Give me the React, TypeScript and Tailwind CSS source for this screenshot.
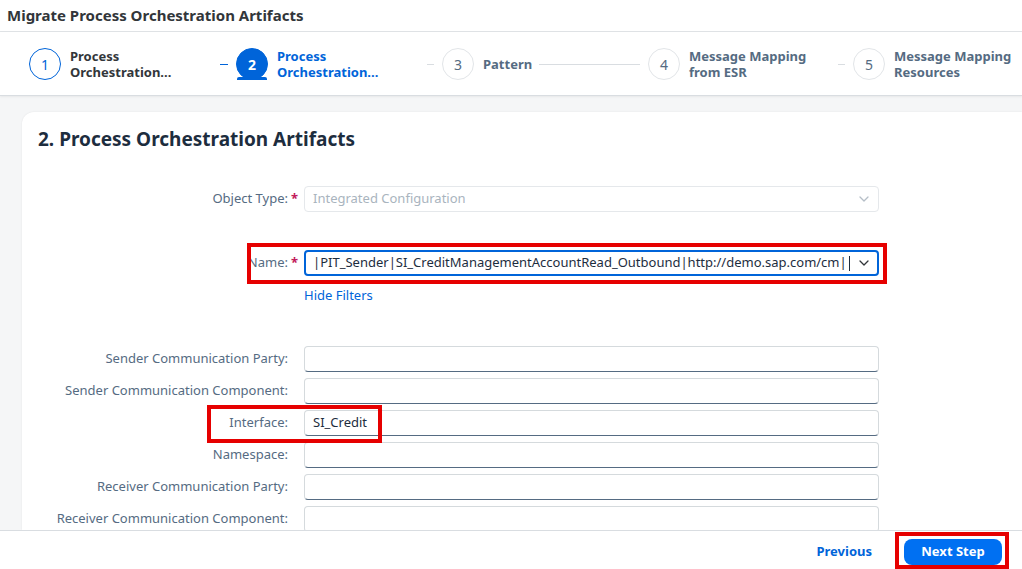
import React from "react";

type StepState = "done" | "active" | "todo";

const Step: React.FC<{ n: number; lines: string[]; state: StepState; textW: string }> = ({
  n,
  lines,
  state,
  textW,
}) => {
  const circle =
    state === "active"
      ? "bg-[#0064d9] border-[#0064d9] text-white font-bold"
      : state === "done"
        ? "bg-white border-[#0064d9] text-[#0064d9]"
        : "bg-white border-[#e2e5e8] text-[#556b82]";
  const text =
    state === "active" ? "text-[#0064d9]" : state === "done" ? "text-[#32363a]" : "text-[#556b82]";
  return (
    <div className="flex items-center shrink-0">
      <div className="relative shrink-0">
        <div
          className={`w-[32px] h-[32px] rounded-full border flex items-center justify-center text-[14px] ${circle}`}
        >
          {n}
        </div>
        {state === "active" && (
          <div className="absolute left-[1px] top-[29px] w-[30px] h-[3px] bg-[#0064d9] rounded-t-[2px]" />
        )}
      </div>
      <div className={`ml-[9px] shrink-0 ${textW} text-[13px] font-bold leading-[16px] ${text}`}>
        {lines.map((l) => (
          <div key={l} className="whitespace-nowrap">
            {l}
          </div>
        ))}
      </div>
    </div>
  );
};

const Connector: React.FC<{ w: string; active?: boolean }> = ({ w, active }) => (
  <div className={`mx-[8px] h-px shrink-0 ${w} ${active ? "bg-[#0064d9]" : "bg-[#d9dde1]"}`} />
);

const Chevron: React.FC<{ color: string }> = ({ color }) => (
  <svg width="12" height="12" viewBox="0 0 12 12" fill="none" className="shrink-0">
    <path d="M2 4 L6 8 L10 4" stroke={color} strokeWidth="1.3" strokeLinecap="round" strokeLinejoin="round" />
  </svg>
);

const FieldRow: React.FC<{ label: string; required?: boolean; children: React.ReactNode }> = ({
  label,
  required,
  children,
}) => (
  <div className="flex items-center h-[26px]">
    <div className="w-[266px] text-right text-[13px] text-[#556b82] whitespace-nowrap">{label}</div>
    <div className="w-[16px] pl-[3px] text-[#c2185b] text-[13px] font-bold">{required ? "*" : ""}</div>
    {children}
  </div>
);

const TextInput: React.FC<{ value?: string }> = ({ value }) => (
  <div className="w-[575px] h-[26px] bg-white rounded-[4px] border border-[#d5dadd] border-b-[#556b82] px-[8px] flex items-center text-[13px] text-[#1d2d3e]">
    {value}
  </div>
);

export default function App() {
  return (
    <div
      className="w-[1022px] h-[569px] overflow-hidden relative flex flex-col bg-[#f5f6f7]"
      style={{ fontFamily: '"Noto Sans", Arial, sans-serif' }}
    >
      {/* title bar */}
      <div className="h-[32px] shrink-0 bg-white border-b border-[#e0e3e6] flex items-center px-[7px]">
        <div className="text-[15px] font-bold text-[#32363a]">Migrate Process Orchestration Artifacts</div>
      </div>

      {/* wizard steps */}
      <div className="h-[64px] shrink-0 bg-white border-b border-[#d9dde1] shadow-[0_1px_2px_rgba(0,0,0,0.06)] flex items-center pl-[29px] pt-[1px]">
        <Step n={1} lines={["Process", "Orchestration..."]} state="done" textW="w-[142px]" />
        <Connector w="w-[8px]" active />
        <Step n={2} lines={["Process", "Orchestration..."]} state="active" textW="w-[142px]" />
        <Connector w="w-[7px]" />
        <Step n={3} lines={["Pattern"]} state="todo" textW="w-[48px]" />
        <Connector w="w-[101px]" />
        <Step n={4} lines={["Message Mapping", "from ESR"]} state="todo" textW="w-[141px]" />
        <Connector w="w-[7px]" />
        <Step n={5} lines={["Message Mapping", "Resources"]} state="todo" textW="w-[142px]" />
      </div>

      {/* content */}
      <div className="flex-1 overflow-hidden pt-[16px] pl-[22px]">
        <div className="bg-white rounded-tl-[12px] h-full shadow-[0_0_2px_rgba(0,0,0,0.08)] pt-[14px]">
          <h1 className="pl-[16px] text-[19px] font-bold leading-[26px] text-[#1d2d3e]">
            2. Process Orchestration Artifacts
          </h1>

          <div className="mt-[34px] flex flex-col">
            <FieldRow label="Object Type:" required>
              <div className="w-[575px] h-[26px] bg-white rounded-[4px] border border-[#e5e8eb] px-[8px] flex items-center justify-between text-[13px] text-[#a9b4be]">
                <span>Integrated Configuration</span>
                <Chevron color="#b5bec7" />
              </div>
            </FieldRow>

            <div className="mt-[38px]">
              <FieldRow label="Name:" required>
                <div className="w-[575px] h-[26px] bg-white rounded-[4px] border-2 border-[#0064d9] pl-[7px] pr-[7px] flex items-center justify-between text-[13px] text-[#1d2d3e]">
                  <span className="whitespace-nowrap flex items-center">
                    |PIT_Sender|SI_CreditManagementAccountRead_Outbound|http://demo.sap.com/cm|
                    <span className="inline-block w-[1px] h-[15px] bg-[#1d2d3e] ml-[2px]" />
                  </span>
                  <Chevron color="#32363a" />
                </div>
              </FieldRow>
            </div>

            <div className="pl-[282px] mt-[11px] text-[13px] text-[#0064d9] leading-[16px]">Hide Filters</div>

            <div className="mt-[43px] flex flex-col gap-[6px]">
              <FieldRow label="Sender Communication Party:">
                <TextInput />
              </FieldRow>
              <FieldRow label="Sender Communication Component:">
                <TextInput />
              </FieldRow>
              <FieldRow label="Interface:">
                <TextInput value="SI_Credit" />
              </FieldRow>
              <FieldRow label="Namespace:">
                <TextInput />
              </FieldRow>
              <FieldRow label="Receiver Communication Party:">
                <TextInput />
              </FieldRow>
              <FieldRow label="Receiver Communication Component:">
                <TextInput />
              </FieldRow>
            </div>
          </div>
        </div>
      </div>

      {/* footer */}
      <div className="h-[39px] shrink-0 bg-white border-t border-[#d9dde1] flex items-center justify-end pr-[20px] pt-[3px]">
        <button className="text-[13px] font-bold text-[#0064d9] mr-[32px]">Previous</button>
        <button className="h-[26px] w-[98px] rounded-[8px] bg-[#0070f2] text-white text-[13px] font-bold">
          Next Step
        </button>
      </div>

      {/* red annotation boxes */}
      <div className="absolute left-[247px] top-[243px] w-[640px] h-[41px] border-4 border-[#e60000]" />
      <div className="absolute left-[207px] top-[405px] w-[175px] h-[38px] border-4 border-[#e60000]" />
      <div className="absolute left-[895px] top-[532px] w-[114px] h-[37px] border-4 border-[#e60000]" />
    </div>
  );
}
